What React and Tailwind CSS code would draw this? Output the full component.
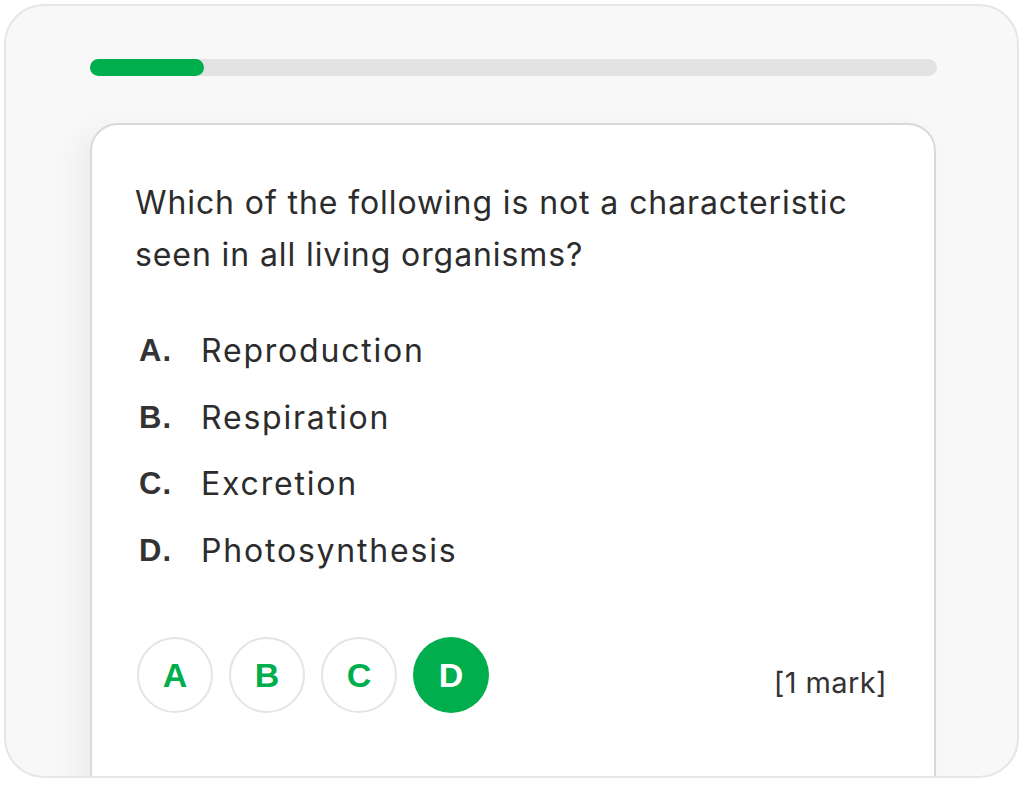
export default function App() {
  const options = [
    ['A.', 'Reproduction'],
    ['B.', 'Respiration'],
    ['C.', 'Excretion'],
    ['D.', 'Photosynthesis'],
  ]
  const answers = ['A', 'B', 'C', 'D']
  const selected = 'D'
  const progress = 13.5

  return (
    <div className="w-[1024px] h-[786px] bg-white p-[4px]">
      <div className="h-[774px] w-[1015px] rounded-[40px] border-2 border-[#e6e6e6] bg-[#f9f8f9] overflow-hidden pl-[84px] pr-[83px] pt-[53px]"
        style={{ fontFamily: 'Inter, "Open Sans", sans-serif' }}>
        {/* progress */}
        <div className="w-[847px] h-[17px] rounded-full bg-[#e3e3e3]">
          <div className="h-[17px] rounded-full bg-[#00ae4d]" style={{ width: `${progress}%` }} />
        </div>

        {/* question card */}
        <div className="mt-[47px] w-[846px] h-[700px] bg-white rounded-[28px] border-2 border-[#d9d9d9] shadow-[-12px_8px_30px_rgba(0,0,0,0.05)] pl-[43px] pr-[47px] pt-[52px]">
          <p className="max-w-[740px] text-[32px] leading-[52px] text-[#2c2c2c] tracking-[0.9px]">
            Which of the following is not a characteristic seen in all living organisms?
          </p>

          <div className="mt-[37px] flex flex-col">
            {options.map(([k, v]) => (
              <div key={k} className="flex items-center h-[66.5px]">
                <span className="w-[66px] pl-[4px] text-[31px] font-bold text-[#333] tracking-[1px]" style={{ fontFamily: '"Liberation Sans", sans-serif' }}>{k}</span>
                <span className="text-[32px] text-[#2c2c2c] tracking-[1.8px]">{v}</span>
              </div>
            ))}
          </div>

          <div className="mt-[53px] flex items-center justify-between">
            <div className="flex gap-[16px] pl-[2px]">
              {answers.map((a) => (
                <div key={a}
                  className={a === selected
                    ? 'w-[76px] h-[76px] rounded-full bg-[#00ae4d] text-white flex items-center justify-center text-[34px] font-bold'
                    : 'w-[76px] h-[76px] rounded-full border-2 border-[#e4e4e4] text-[#00ae4d] flex items-center justify-center text-[34px] font-bold'}
                  style={{ fontFamily: '"Liberation Sans", sans-serif' }}>
                  {a}
                </div>
              ))}
            </div>
            <span className="mt-[16px] text-[29px] text-[#333] tracking-[0.4px]">[1 mark]</span>
          </div>
        </div>
      </div>
    </div>
  )
}
